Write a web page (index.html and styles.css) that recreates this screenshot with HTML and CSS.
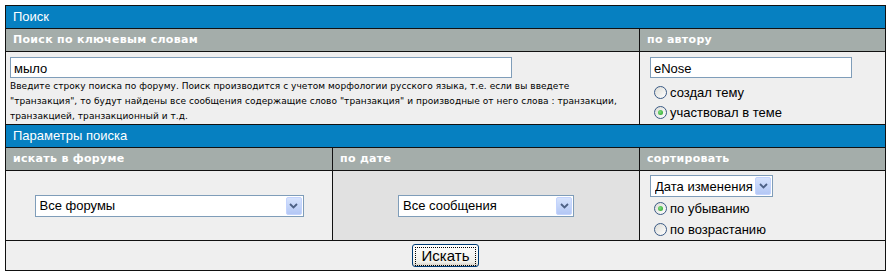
FILE: index.html
```html
<!DOCTYPE html>
<html lang="ru">
<head>
    <meta charset="UTF-8">
    <title>Поиск по форуму</title>
    <link rel="stylesheet" href="styles.css">
</head>
<body>
    <!-- Search form -->
    <form class="search-form" onsubmit="return false;">
        <table class="search">
            <colgroup>
                <col class="col-forum">
                <col class="col-date">
                <col class="col-sort">
            </colgroup>

            <!-- Keywords / author -->
            <tr>
                <td colspan="3" class="title">Поиск</td>
            </tr>
            <tr>
                <th colspan="2">Поиск по ключевым словам</th>
                <th>по автору</th>
            </tr>
            <tr>
                <td colspan="2" class="keywords">
                    <input type="text" class="text-input keywords-input" value="мыло">
                    <p class="hint">Введите строку поиска по форуму. Поиск производится с учетом морфологии русского языка, т.е. если вы введете<br>"транзакция", то будут найдены все сообщения содержащие слово "транзакция" и производные от него слова : транзакции,<br>транзакцией, транзакционный и т.д.</p>
                </td>
                <td class="author">
                    <input type="text" class="text-input author-input" value="eNose">
                    <label class="radio first"><input type="radio" name="author_mode"> создал тему</label>
                    <label class="radio"><input type="radio" name="author_mode" checked> участвовал в теме</label>
                </td>
            </tr>

            <!-- Search params -->
            <tr>
                <td colspan="3" class="title">Параметры поиска</td>
            </tr>
            <tr>
                <th>искать в форуме</th>
                <th>по дате</th>
                <th>сортировать</th>
            </tr>
            <tr>
                <td class="centered">
                    <span class="dropdown forum-select">
                        <select><option>Все форумы</option></select>
                        <span class="arrow"><svg width="9" height="6" viewBox="0 0 9 6"><path d="M1 1 L4.5 4.5 L8 1" fill="none" stroke="#4d6185" stroke-width="1.8"/></svg></span>
                    </span>
                </td>
                <td class="centered by-date">
                    <span class="dropdown date-select">
                        <select><option>Все сообщения</option></select>
                        <span class="arrow"><svg width="9" height="6" viewBox="0 0 9 6"><path d="M1 1 L4.5 4.5 L8 1" fill="none" stroke="#4d6185" stroke-width="1.8"/></svg></span>
                    </span>
                </td>
                <td class="sort">
                    <span class="dropdown sort-select">
                        <select><option>Дата изменения</option></select>
                        <span class="arrow"><svg width="9" height="6" viewBox="0 0 9 6"><path d="M1 1 L4.5 4.5 L8 1" fill="none" stroke="#4d6185" stroke-width="1.8"/></svg></span>
                    </span>
                    <label class="radio first"><input type="radio" name="sort_order" checked> по убыванию</label>
                    <label class="radio"><input type="radio" name="sort_order"> по возрастанию</label>
                </td>
            </tr>
            <tr>
                <td colspan="3" class="actions">
                    <button type="submit" class="search-btn"><span>Искать</span></button>
                </td>
            </tr>
        </table>
    </form>
</body>
</html>
```

FILE: styles.css
```css
body {
    margin: 0;
    font-family: "Liberation Sans", Arial, sans-serif;
    font-size: 13px;
    background-color: #fff;
}

.search-form {
    margin: 0;
}

.search {
    margin: 5px;
    width: 880px;
    table-layout: fixed;
    border-collapse: collapse;
    border: 1px solid #111;
}

.col-forum { width: 327px; }
.col-date { width: 307px; }
.col-sort { width: 246px; }

.search td,
.search th {
    border: 1px solid #111;
    padding: 0;
    background-color: #efefef;
}

.search .title {
    background-color: #0680c1;
    color: #fff;
    line-height: 22px;
    padding: 0 7px;
    font-size: 13px;
}

.search th {
    background-color: #a4adaa;
    color: #fff;
    font: bold 11px/22px "DejaVu Sans", Verdana, sans-serif;
    letter-spacing: 0.3px;
    text-align: left;
    padding: 0 7px;
}

.search .keywords {
    vertical-align: top;
    padding: 5px 4px 0;
}

.text-input {
    display: block;
    box-sizing: border-box;
    height: 21px;
    margin: 0;
    padding: 1px 3px 0;
    border: 1px solid #7f9db9;
    background: #fff;
    font-family: "Liberation Sans", Arial, sans-serif;
    font-size: 13px;
    color: #000;
}

.keywords-input { width: 502px; }
.author-input { width: 202px; }

.hint {
    margin: 1px 0 0;
    font: 9px/15px "DejaVu Sans", Verdana, sans-serif;
    letter-spacing: 0.05px;
    color: #000;
}

.search .author {
    vertical-align: top;
    padding: 5px 10px 0;
}

.radio {
    display: flex;
    align-items: center;
    gap: 3px;
    height: 20px;
    font-size: 13px;
    color: #000;
}

.author .radio.first { margin-top: 4px; }

.radio input {
    appearance: none;
    box-sizing: border-box;
    width: 13px;
    height: 13px;
    margin: 0 0 0 4px;
    border: 1px solid #3a5a85;
    border-radius: 50%;
    background: linear-gradient(135deg, #dcdcd7, #fff);
    display: grid;
    place-items: center;
}

.radio input:checked::after {
    content: "";
    width: 5px;
    height: 5px;
    border-radius: 50%;
    background: radial-gradient(circle at 40% 40%, #7fdc7f, #21a121);
}

.search .centered {
    text-align: center;
    vertical-align: middle;
    height: 69px;
}

.search .by-date {
    background-color: #e1e1e1;
}

.search .sort {
    vertical-align: top;
    padding: 4px 10px 0;
}

.sort .radio.first { margin-top: 1px; }
.sort .radio { height: 21px; }

.dropdown {
    display: inline-flex;
    box-sizing: border-box;
    height: 22px;
    border: 1px solid #7f9db9;
    background: #fff;
    vertical-align: middle;
    text-align: left;
}

.dropdown select {
    appearance: none;
    flex: 1;
    min-width: 0;
    border: none;
    background: transparent;
    padding: 0 0 0 4px;
    font-family: "Liberation Sans", Arial, sans-serif;
    font-size: 13px;
    color: #000;
    outline: none;
}

.dropdown .arrow {
    display: flex;
    align-items: center;
    justify-content: center;
    box-sizing: border-box;
    width: 16px;
    margin: 1px;
    border: 1px solid #c3d3fd;
    border-radius: 2px;
    background: linear-gradient(#d6e3fd, #b3c7f5);
}

.forum-select { width: 269px; }
.date-select { width: 176px; }
.sort-select { width: 123px; }

.search .actions {
    text-align: center;
    height: 29px;
    vertical-align: middle;
}

.search-btn {
    box-sizing: border-box;
    width: 67px;
    height: 23px;
    padding: 2px;
    border: 1px solid #003c74;
    border-radius: 3px;
    background: linear-gradient(#ffffff, #f0f0ea 80%, #d6d0c5);
    font-family: "Liberation Sans", Arial, sans-serif;
    font-size: 15px;
    color: #000;
    cursor: pointer;
    vertical-align: middle;
}

.search-btn span {
    display: block;
    height: 100%;
    border: 1px dotted #000;
    line-height: 16px;
}
```
